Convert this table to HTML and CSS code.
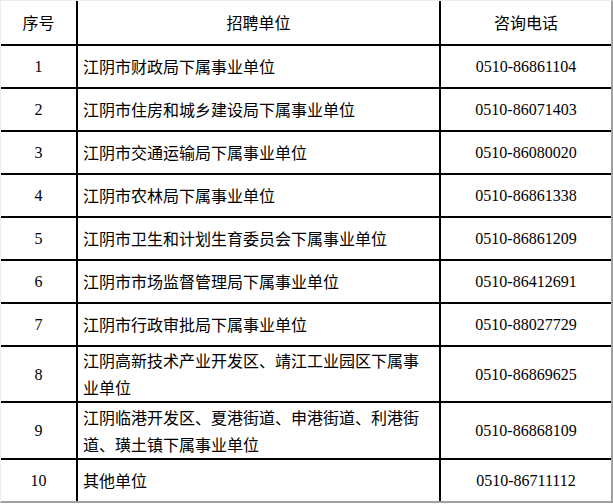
FILE: index.html
```html
<!DOCTYPE html>
<html lang="zh-CN">
<head>
<meta charset="utf-8">
<link rel="stylesheet" href="styles.css">
</head>
<body>
<div class="frame">
<table class="grid">
<colgroup><col class="c-no"><col class="c-unit"><col class="c-tel"></colgroup>
<tr class="head"><th>序号</th><th>招聘单位</th><th class="last">咨询电话</th></tr>
<tr class="r"><td class="no">1</td><td class="unit">江阴市财政局下属事业单位</td><td class="tel">0510-86861104</td></tr>
<tr class="r"><td class="no">2</td><td class="unit">江阴市住房和城乡建设局下属事业单位</td><td class="tel">0510-86071403</td></tr>
<tr class="r"><td class="no">3</td><td class="unit">江阴市交通运输局下属事业单位</td><td class="tel">0510-86080020</td></tr>
<tr class="r"><td class="no">4</td><td class="unit">江阴市农林局下属事业单位</td><td class="tel">0510-86861338</td></tr>
<tr class="r"><td class="no">5</td><td class="unit">江阴市卫生和计划生育委员会下属事业单位</td><td class="tel">0510-86861209</td></tr>
<tr class="r"><td class="no">6</td><td class="unit">江阴市市场监督管理局下属事业单位</td><td class="tel">0510-86412691</td></tr>
<tr class="r"><td class="no">7</td><td class="unit">江阴市行政审批局下属事业单位</td><td class="tel">0510-88027729</td></tr>
<tr class="r8"><td class="no">8</td><td class="unit">江阴高新技术产业开发区、靖江工业园区下属事业单位</td><td class="tel">0510-86869625</td></tr>
<tr class="r9"><td class="no">9</td><td class="unit">江阴临港开发区、夏港街道、申港街道、利港街道、璜土镇下属事业单位</td><td class="tel">0510-86868109</td></tr>
<tr class="r10"><td class="no">10</td><td class="unit">其他单位</td><td class="tel">0510-86711112</td></tr>
</table>
</div>
</body>
</html>
```
FILE: styles.css
```css
html, body {
  margin: 0;
  padding: 0;
  background: #ffffff;
}
.frame {
  width: 613px;
  height: 503px;
  box-sizing: border-box;
  border-top: 1px solid #ececec;
  border-left: 1px solid #ececec;
  border-right: 2px solid #a0a0a0;
  border-bottom: 2px solid #a0a0a0;
  overflow: hidden;
}
.grid {
  border-collapse: separate;
  border-spacing: 0;
  table-layout: fixed;
  width: 610px;
  color: #000;
  font-size: 16px;
  line-height: 27px;
}
.c-no { width: 77px; }
.c-unit { width: 363px; }
.c-tel { width: 170px; }
th, td {
  box-sizing: border-box;
  padding: 0;
  vertical-align: middle;
  border-right: 2px solid #000;
  border-bottom: 2px solid #000;
}
th.last, td.tel { border-right: none; }
th {
  font-family: "Noto Sans CJK SC", sans-serif;
  font-weight: normal;
  text-align: center;
  height: 45px;
}
.r td { height: 43px; }
.r8 td { height: 56px; }
.r9 td { height: 57px; }
.r10 td { height: 41px; border-bottom: none; }
td.no, td.tel {
  font-family: "Liberation Serif", serif;
  text-align: center;
}
td.unit {
  font-family: "Noto Sans CJK SC", sans-serif;
  text-align: left;
  padding: 0 8px 0 5px;
}
```
